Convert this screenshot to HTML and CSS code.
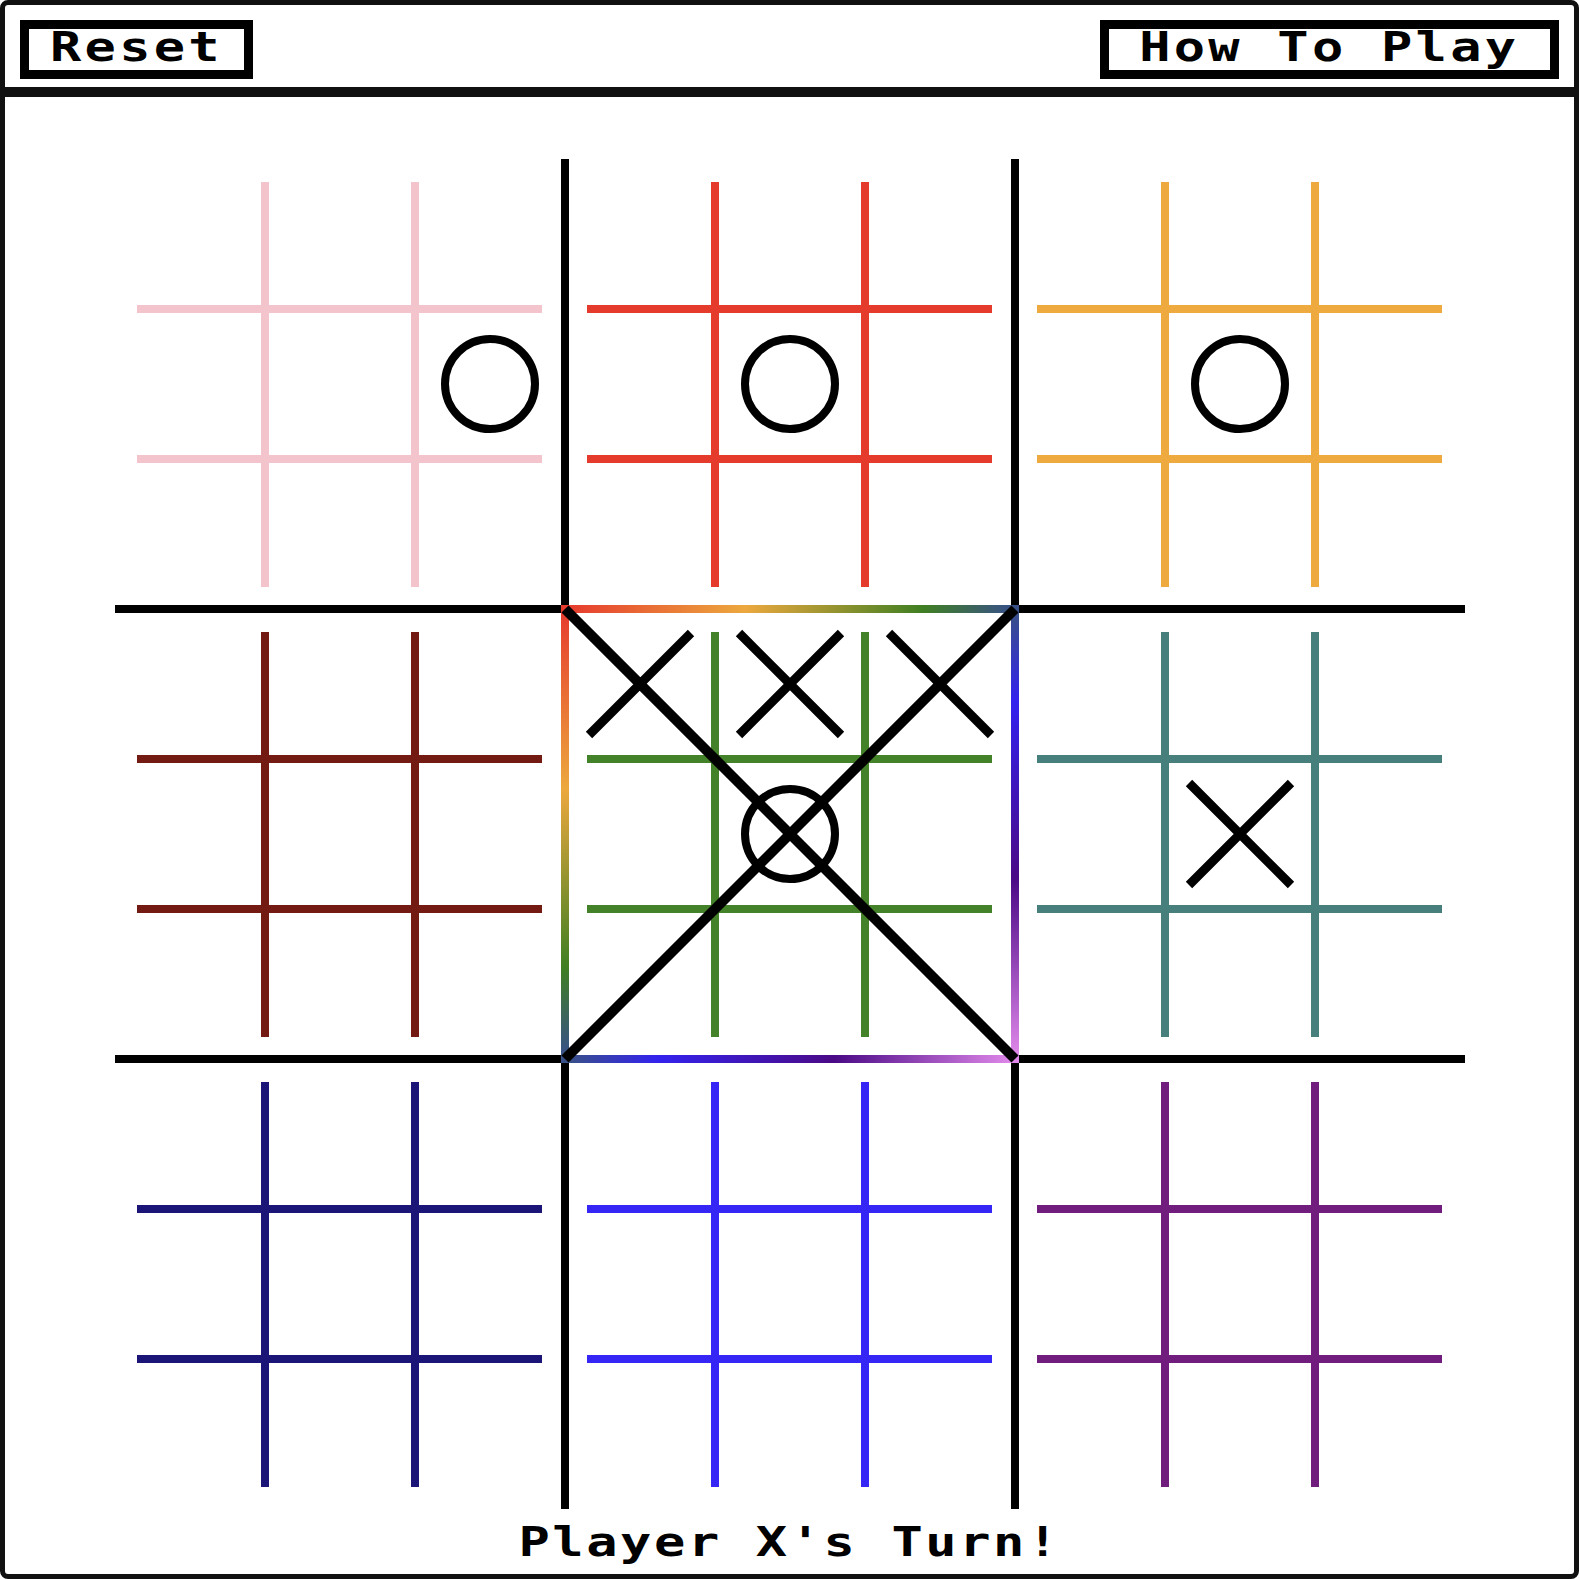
FILE: index.html
```html
<!DOCTYPE html>
<html lang="en">
<head>
  <meta charset="UTF-8" />
  <meta name="viewport" content="width=device-width, initial-scale=1.0"/>
  <title>Ultimate Tic Tac Toe</title>
  <link rel="stylesheet" href="styles.css">
</head>
<body>

  <header class="topbar">
    <button class="btn btn-reset" onclick="resetGame()"><span class="wide">Reset</span></button>
    <button class="btn btn-help"><span class="wide">How To Play</span></button>
  </header>

  <main class="game">
    <div class="board" id="board"></div>
    <p class="status"><span class="wide" id="status">Player X's Turn!</span></p>
  </main>

  <script>
    const colors = ["#f3c4cc", "#e53b2c", "#eeaa3f", "#731b13", "#44822a", "#477f7d", "#1c1578", "#3526f5", "#711d7d"];

    let boards = [
      ["", "", "", "", "", "O", "", "", ""],
      ["", "", "", "", "O", "", "", "", ""],
      ["", "", "", "", "O", "", "", "", ""],
      ["", "", "", "", "", "", "", "", ""],
      ["X", "X", "X", "", "O", "", "", "", ""],
      ["", "", "", "", "X", "", "", "", ""],
      ["", "", "", "", "", "", "", "", ""],
      ["", "", "", "", "", "", "", "", ""],
      ["", "", "", "", "", "", "", "", ""]
    ];
    let winners = ["", "", "", "", "X", "", "", "", ""];

    const xMark = '<svg class="mark-x" viewBox="0 0 150 150"><path d="M24 24 L126 126 M126 24 L24 126" /></svg>';
    const oMark = '<div class="mark-o"></div>';
    const bigX = '<svg class="won-x" viewBox="0 0 450 450"><path d="M0 0 L450 450 M450 0 L0 450" /></svg>';

    function render() {
      const board = document.getElementById("board");
      board.innerHTML = "";

      boards.forEach((cells, i) => {
        const big = document.createElement("div");
        big.className = "big";
        big.style.setProperty("--c", colors[i]);

        cells.forEach(v => {
          const cell = document.createElement("div");
          cell.className = "cell";
          if (v === "X") cell.innerHTML = xMark;
          if (v === "O") cell.innerHTML = oMark;
          big.appendChild(cell);
        });

        if (winners[i]) {
          const frame = document.createElement("div");
          frame.className = "won-frame";
          big.appendChild(frame);
          if (winners[i] === "X") big.insertAdjacentHTML("beforeend", bigX);
        }

        board.appendChild(big);
      });
    }

    function resetGame() {
      boards = boards.map(() => Array(9).fill(""));
      winners = Array(9).fill("");
      document.getElementById("status").textContent = "Player X's Turn!";
      render();
    }

    render();
  </script>

</body>
</html>
```

FILE: styles.css
```css
* {
  box-sizing: border-box;
}

body {
  margin: 0;
  background: #fff;
  color: #000;
  font-family: "DejaVu Sans Mono", "Liberation Mono", monospace;
  font-weight: bold;
}

/* stretched glyphs for the chunky pixel look */
.wide {
  display: inline-block;
  letter-spacing: 2.5px;
  transform: scaleX(1.3);
}

.topbar {
  display: flex;
  justify-content: space-between;
  align-items: flex-start;
  height: 92px;
  padding: 15px 15px 0;
  border: 5px solid #111;
  border-radius: 8px 8px 0 0;
}

.btn {
  height: 59px;
  padding: 0 0 5px;
  border: 9px solid #000;
  background: #fff;
  color: #000;
  font: inherit;
  font-size: 40px;
  line-height: 36px;
  cursor: pointer;
}

.btn-reset {
  width: 233px;
}

.btn-help {
  width: 459px;
}

.game {
  height: 1487px;
  padding-top: 62px;
  border: 5px solid #111;
  border-radius: 0 0 8px 8px;
}

.board {
  display: grid;
  grid-template-columns: repeat(3, 450px);
  grid-template-rows: repeat(3, 450px);
  width: 1350px;
  margin: 0 auto;
  background:
    linear-gradient(#000, #000) 446px 0 / 8px 100% no-repeat,
    linear-gradient(#000, #000) 896px 0 / 8px 100% no-repeat,
    linear-gradient(#000, #000) 0 446px / 100% 8px no-repeat,
    linear-gradient(#000, #000) 0 896px / 100% 8px no-repeat;
}

.big {
  position: relative;
  display: grid;
  grid-template-columns: repeat(3, 150px);
  grid-template-rows: repeat(3, 150px);
}

/* small board lines, inset from the big cell */
.big::before {
  content: "";
  position: absolute;
  inset: 22.5px;
  background:
    linear-gradient(var(--c), var(--c)) 123.5px 0 / 8px 100% no-repeat,
    linear-gradient(var(--c), var(--c)) 273.5px 0 / 8px 100% no-repeat,
    linear-gradient(var(--c), var(--c)) 0 123.5px / 100% 8px no-repeat,
    linear-gradient(var(--c), var(--c)) 0 273.5px / 100% 8px no-repeat;
}

.cell {
  position: relative;
  z-index: 1;
  display: flex;
  align-items: center;
  justify-content: center;
}

.mark-o {
  width: 98px;
  height: 98px;
  border: 8px solid #000;
  border-radius: 50%;
}

.mark-x {
  width: 150px;
  height: 150px;
}

.mark-x path,
.won-x path {
  fill: none;
  stroke: #000;
  stroke-width: 9;
}

.won-x path {
  stroke-width: 10;
}

.won-frame {
  position: absolute;
  inset: -4px;
  z-index: 2;
  border: 8px solid;
  border-image: linear-gradient(135deg, #e63b2e, #eca83e 20%, #3f7f22 40%, #3322ee 60%, #4b0a86 80%, #e088ea) 1;
  pointer-events: none;
}

.won-x {
  position: absolute;
  inset: 0;
  z-index: 3;
  width: 450px;
  height: 450px;
  overflow: visible;
  pointer-events: none;
}

.status {
  margin: 11px 0 0;
  text-align: center;
  font-size: 40px;
  line-height: 45px;
}

.status .wide {
  letter-spacing: 2px;
}
```
